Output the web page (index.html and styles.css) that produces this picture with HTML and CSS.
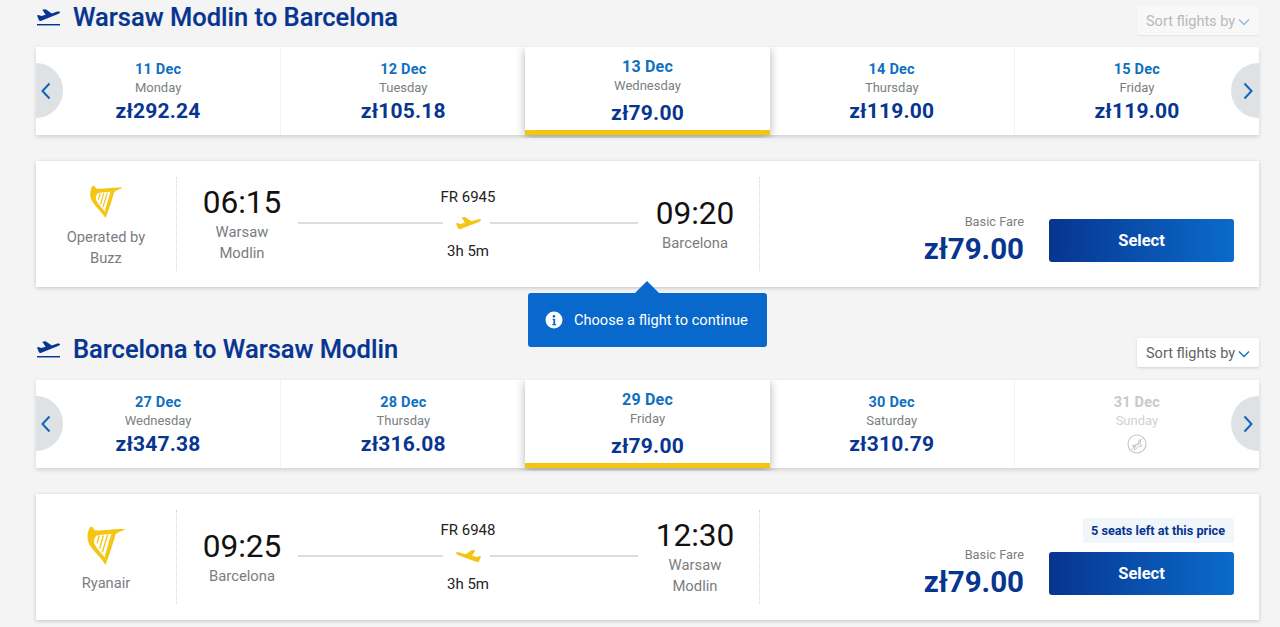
FILE: index.html
```html
<!DOCTYPE html>
<html lang="en">
<head>
<meta charset="utf-8">
<title>Flights</title>
<link rel="stylesheet" href="styles.css">
</head>
<body>
<svg class="defs" width="0" height="0" aria-hidden="true">
  <defs>
    <symbol id="harp" viewBox="0 0 40 38">
      <path d="M5 1C7 0 8 2 9 4 16 5 28 2 39 3 34 5 31 6 29 8 27 16 23 28 19.500 37 16 31 10 26 5 19 2 14 1 7 5 1Z" fill="#f3c614"/>
      <path d="M11 9C16 8 22 8 26 7.500 24 15 21 24 19 30 15 25 11 21 9 17 8 14 9 11 11 9Z" fill="#fff"/>
      <path d="M13.500 9 11.500 16.500M17.500 9 14 21.500M21.500 8.500 16.500 25M25.500 8 19.500 29" fill="none" stroke="#f3c614" stroke-width="1.300"/>
    </symbol>
    <symbol id="plane" viewBox="0 0 25 12">
      <path d="M0 6.500 1.500 6 4.500 7 9 5.600 5.500.5 9 0 15.500 4.200 21.500 2.500c1.500-.4 3.200-.3 3.500.4.200.8-.7 1.500-2 2L4.500 12c-1.200.4-2 .1-2.500-.6Z" fill="#f3c614"/>
    </symbol>
    <symbol id="takeoff" viewBox="0 0 24 17">
      <path d="M0 15.300h24v1.500H0Z" fill="#073590"/>
      <path d="M0 6.500 1.500 6 4.500 7 9 5.600 5.500.5 9 0 15.500 4.200 20.500 2.500c1.500-.4 3.200-.3 3.500.4.200.8-.7 1.500-2 2L4.500 12c-1.200.4-2 .1-2.500-.6Z" fill="#073590"/>
    </symbol>
    <symbol id="chev-l" viewBox="0 0 10 18"><path d="M8.500 1.500 1.500 9l7 7.500" fill="none" stroke="#0f66b8" stroke-width="2"/></symbol>
    <symbol id="chev-r" viewBox="0 0 10 18"><path d="M1.500 1.500 8.500 9l-7 7.500" fill="none" stroke="#0f66b8" stroke-width="2"/></symbol>
  </defs>
</svg>

<main class="page">
  <section class="leg leg-first">
    <header class="leg-head">
      <h2 class="leg-title"><svg class="takeoff"><use href="#takeoff"/></svg>Warsaw Modlin to Barcelona</h2>
      <button class="sort sort-dim">Sort flights by<svg class="sort-chev" viewBox="0 0 12 8"><path d="M1 1.500 6 6.500l5-5" fill="none" stroke="#0f6fc6" stroke-width="1.400"/></svg></button>
    </header>
    <div class="dates">
      <span class="nav nav-l"><svg class="chev"><use href="#chev-l"/></svg></span>
      <div class="date"><b class="d">11 Dec</b><span class="w">Monday</span><b class="p">zł292.24</b></div>
      <div class="date"><b class="d">12 Dec</b><span class="w">Tuesday</span><b class="p">zł105.18</b></div>
      <div class="date on"><b class="d">13 Dec</b><span class="w">Wednesday</span><b class="p">zł79.00</b></div>
      <div class="date"><b class="d">14 Dec</b><span class="w">Thursday</span><b class="p">zł119.00</b></div>
      <div class="date"><b class="d">15 Dec</b><span class="w">Friday</span><b class="p">zł119.00</b></div>
      <span class="nav nav-r"><svg class="chev"><use href="#chev-r"/></svg></span>
    </div>
    <article class="card">
      <div class="carrier">
        <svg class="harp harp-sm"><use href="#harp"/></svg>
        <span class="carrier-name">Operated by<br>Buzz</span>
      </div>
      <div class="times">
        <div class="stop"><span class="time">06:15</span><span class="city">Warsaw<br>Modlin</span></div>
        <div class="route">
          <span class="fn">FR 6945</span>
          <div class="line"><i></i><svg class="plane"><use href="#plane"/></svg><i></i></div>
          <span class="dur">3h 5m</span>
        </div>
        <div class="stop"><span class="time">09:20</span><span class="city">Barcelona</span></div>
      </div>
      <div class="fare">
        <div class="fare-price"><span class="fare-label">Basic Fare</span><b class="fare-val">zł79.00</b></div>
        <div class="fare-action"><button class="select">Select</button></div>
      </div>
    </article>
    <div class="tip"><svg class="info" viewBox="0 0 18 18"><circle cx="9" cy="9" r="8.500" fill="#fff"/><circle cx="9" cy="5.200" r="1.300" fill="#0868cb"/><path d="M7.600 7.800h2.500v5.200h1v1.200H7.300V13h1V9h-.7Z" fill="#0868cb"/></svg>Choose a flight to continue</div>
  </section>

  <section class="leg">
    <header class="leg-head">
      <h2 class="leg-title"><svg class="takeoff"><use href="#takeoff"/></svg>Barcelona to Warsaw Modlin</h2>
      <button class="sort">Sort flights by<svg class="sort-chev" viewBox="0 0 12 8"><path d="M1 1.500 6 6.500l5-5" fill="none" stroke="#0f6fc6" stroke-width="1.400"/></svg></button>
    </header>
    <div class="dates">
      <span class="nav nav-l"><svg class="chev"><use href="#chev-l"/></svg></span>
      <div class="date"><b class="d">27 Dec</b><span class="w">Wednesday</span><b class="p">zł347.38</b></div>
      <div class="date"><b class="d">28 Dec</b><span class="w">Thursday</span><b class="p">zł316.08</b></div>
      <div class="date on"><b class="d">29 Dec</b><span class="w">Friday</span><b class="p">zł79.00</b></div>
      <div class="date"><b class="d">30 Dec</b><span class="w">Saturday</span><b class="p">zł310.79</b></div>
      <div class="date off"><b class="d">31 Dec</b><span class="w">Sunday</span>
        <svg class="noflight" viewBox="0 0 20 20"><circle cx="10" cy="10" r="9" fill="none" stroke="#c4c6c9" stroke-width="1.100"/><path d="M4.500 15.500 15.500 4.500M5.500 11.500l5.500-1 1.500-5 1 .5-.5 4.500 2 1-1 1-2.500-.5-3.500 4-1-.5 1.500-3.500-3 .2Z" fill="none" stroke="#c4c6c9" stroke-width="1"/></svg>
      </div>
      <span class="nav nav-r"><svg class="chev"><use href="#chev-r"/></svg></span>
    </div>
    <article class="card">
      <div class="carrier">
        <svg class="harp"><use href="#harp"/></svg>
        <span class="carrier-name">Ryanair</span>
      </div>
      <div class="times">
        <div class="stop"><span class="time">09:25</span><span class="city">Barcelona</span></div>
        <div class="route">
          <span class="fn">FR 6948</span>
          <div class="line"><i></i><svg class="plane plane-land"><use href="#plane"/></svg><i></i></div>
          <span class="dur">3h 5m</span>
        </div>
        <div class="stop"><span class="time">12:30</span><span class="city">Warsaw<br>Modlin</span></div>
      </div>
      <div class="fare">
        <div class="fare-price"><span class="fare-label">Basic Fare</span><b class="fare-val">zł79.00</b></div>
        <div class="fare-action"><span class="seats">5 seats left at this price</span><button class="select">Select</button></div>
      </div>
    </article>
  </section>
</main>
</body>
</html>
```
FILE: styles.css
```css
* { box-sizing: border-box; }
html, body { margin: 0; height: 627px; overflow: hidden; }
body { background: #f4f4f4; font-family: Roboto, "Liberation Sans", sans-serif; color: #444; }
.defs { position: absolute; }
.page { padding: 0 21px 0 36px; }
.leg { position: relative; }
.leg-first { margin-bottom: 46px; }
.leg-head { height: 47px; display: flex; justify-content: space-between; align-items: flex-start; }
.leg-title { margin: 0 0 0 1px; height: 32px; display: flex; align-items: center; gap: 13px; font-size: 25.500px; line-height: 32px; font-weight: 500; color: #073590; -webkit-text-stroke: .2px #073590; }
.leg-first .leg-title { margin-top: 1px; }
.takeoff { width: 23px; height: 17px; flex: none; }
.sort { margin-top: 5px; height: 29px; width: 122px; padding: 1px 0 0 9px; border: 0; border-radius: 2px; background: #fff; box-shadow: 0 1px 3px rgba(0,0,0,.15); display: flex; align-items: center; gap: 3px; font: 400 14.500px Roboto, sans-serif; color: #5f6368; }
.leg-first .sort { margin-top: 6px; }
.sort-dim { background: #f8f8f8; color: #b5b8bb; box-shadow: 0 1px 2px rgba(0,0,0,.07); }
.sort-dim .sort-chev { opacity: .45; }
.sort-chev { width: 12px; height: 8px; margin-top: 2px; }
.dates { position: relative; height: 88px; display: flex; background: #fff; box-shadow: 0 2px 4px rgba(0,0,0,.14); }
.date { flex: 1 1 0; min-width: 0; position: relative; padding-top: 14px; display: flex; flex-direction: column; align-items: center; border-right: 1px solid #f3f3f3; }
.date:nth-last-child(2) { border-right: 0; }
.d { font-size: 14.500px; line-height: 18px; font-weight: 700; color: #0f6fc0; letter-spacing: .2px; }
.w { font-size: 13px; line-height: 18px; color: #7c7f82; }
.p { font-size: 21px; line-height: 28px; font-weight: 700; color: #073590; letter-spacing: .2px; }
.on { padding-top: 11px; margin-left: -1px; border-right: 0; background: #fff; border-bottom: 5px solid #f3c614; box-shadow: 0 2px 9px rgba(0,0,0,.3); clip-path: inset(0 -14px -3px -14px); z-index: 1; }
.on .d { font-size: 16px; line-height: 18px; }
.on .w { line-height: 20px; }
.on .p { margin-top: 3px; }
.off .d { color: #c7c9cb; }
.off .w { color: #cfd1d3; }
.noflight { width: 20px; height: 20px; margin-top: 4px; }
.nav { position: absolute; z-index: 2; top: 16px; width: 28px; height: 55px; background: #dfe2e5; display: flex; align-items: center; }
.nav-l { left: 0; width: 27px; border-radius: 0 28px 28px 0; padding-left: 5px; }
.nav-r { right: 0; border-radius: 28px 0 0 28px; padding-left: 12px; }
.chev { width: 10px; height: 18px; }
.card { margin-top: 26px; height: 126px; background: #fff; box-shadow: 0 1px 4px rgba(0,0,0,.2); display: flex; padding: 16px 0; }
.carrier { width: 141px; flex: none; padding-top: 6px; border-right: 1px dotted #d5d5d5; display: flex; flex-direction: column; align-items: center; justify-content: center; color: #7a7d80; }
.harp { width: 42px; height: 40px; margin-bottom: 7px; }
.harp-sm { width: 36px; height: 34px; margin-bottom: 8px; }
.carrier-name { font-size: 14.700px; line-height: 21px; text-align: center; }
.times { width: 583px; flex: none; border-right: 1px dotted #d5d5d5; display: grid; grid-template-columns: 130px 331px 114px; align-items: center; }
.stop { display: flex; flex-direction: column; align-items: center; margin-top: -1px; }
.time { font-size: 31.600px; line-height: 39px; color: #111; }
.city { font-size: 14.800px; line-height: 21px; color: #7a7d80; text-align: center; }
.route { width: 340px; justify-self: start; display: flex; flex-direction: column; align-items: center; margin-left: -9px; margin-top: -1px; }
.fn, .dur { font-size: 15px; line-height: 18px; color: #222; }
.line { width: 340px; height: 36px; padding-bottom: 2px; display: flex; align-items: center; gap: 6px; }
.line i { flex: 1; height: 2px; background: #dedede; }
.line i:first-child { flex: 0 0 145px; }
.plane { width: 25px; height: 12px; flex: none; margin: 0 3px 0 7px; }
.plane-land { transform: scaleX(-1); }
.fare { flex: 1; display: flex; justify-content: flex-end; align-items: flex-end; padding: 0 25px 9px 0; gap: 25px; }
.fare-price { display: flex; flex-direction: column; align-items: flex-end; margin-bottom: -5px; }
.fare-label { font-size: 12.800px; line-height: 16px; margin-bottom: 1px; color: #7c7f82; }
.fare-val { font-size: 29.500px; line-height: 36px; font-weight: 700; color: #073590; }
.fare-action { width: 185px; display: flex; flex-direction: column; align-items: flex-end; }
.select { width: 185px; height: 43px; border: 0; border-radius: 3px; background: linear-gradient(90deg, #073590 0%, #0b6bcb 100%); color: #fff; font: 700 16.500px Roboto, sans-serif; }
.seats { height: 25px; padding: 1px 9px 0 8px; margin-bottom: 9px; border-radius: 3px; background: #f1f6fb; font-size: 12.700px; line-height: 24px; font-weight: 700; color: #073590; white-space: nowrap; }
.tip { position: absolute; z-index: 3; left: 492px; top: 293px; width: 239px; height: 54px; padding-left: 17px; background: #0868cb; border-radius: 3px; display: flex; align-items: center; gap: 11px; color: #fff; font-size: 14.600px; white-space: nowrap; }
.tip::before { content: ""; position: absolute; left: 107px; top: -12px; border: solid transparent; border-width: 0 12px 12px; border-bottom-color: #0868cb; }
.info { width: 18px; height: 18px; flex: none; }
```
